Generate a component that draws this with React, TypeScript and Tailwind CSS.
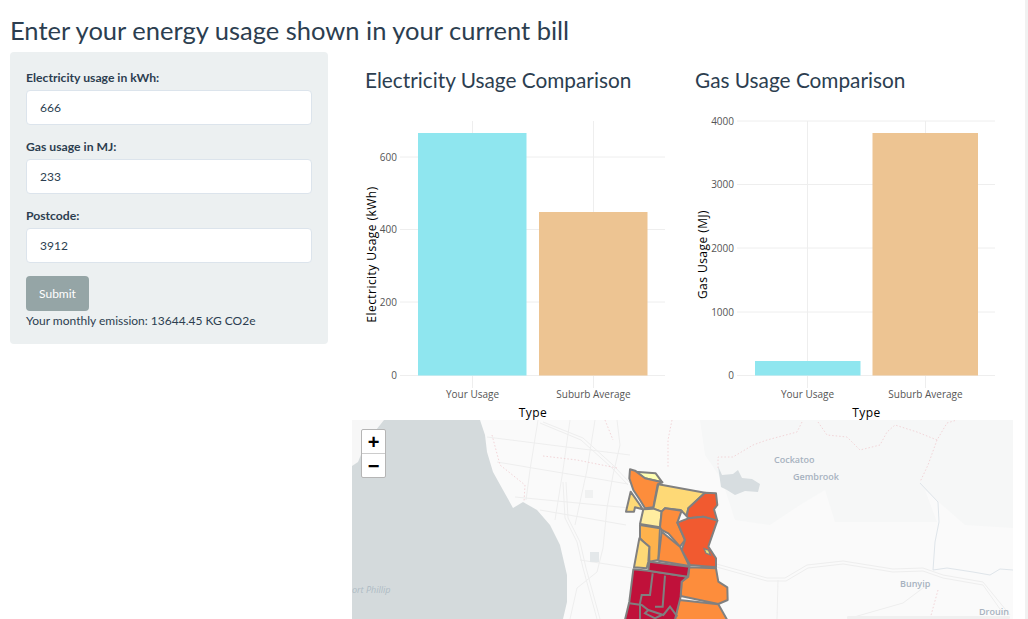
const LATO = "font-['Lato',sans-serif]";

type Bar = { x: number; w: number; top: number; fill: string };

type ChartSpec = {
  // all numbers are page pixels, the svg viewBox is offset to match
  left: number;
  plotLeft: number;
  plotRight: number;
  yTicks: { label: string; y: number }[];
  xTicks: { label: string; x: number }[];
  bars: Bar[];
  yTitle: string;
  yTitleX: number;
  xTitleX: number;
};

const CYAN = "#8fe6ef";
const TAN = "#edc492";

const elecChart: ChartSpec = {
  left: 352,
  plotLeft: 400,
  plotRight: 665,
  yTicks: [
    { label: "600", y: 157 },
    { label: "400", y: 229.5 },
    { label: "200", y: 302 },
    { label: "0", y: 375.5 },
  ],
  xTicks: [
    { label: "Your Usage", x: 472.5 },
    { label: "Suburb Average", x: 593.5 },
  ],
  bars: [
    { x: 418, w: 108.5, top: 133, fill: CYAN },
    { x: 539, w: 108.5, top: 212, fill: TAN },
  ],
  yTitle: "Electricity Usage (kWh)",
  yTitleX: 376,
  xTitleX: 533,
};

const gasChart: ChartSpec = {
  left: 682,
  plotLeft: 737,
  plotRight: 995,
  yTicks: [
    { label: "4000", y: 121 },
    { label: "3000", y: 184.5 },
    { label: "2000", y: 248 },
    { label: "1000", y: 312 },
    { label: "0", y: 375.5 },
  ],
  xTicks: [
    { label: "Your Usage", x: 807.5 },
    { label: "Suburb Average", x: 925.5 },
  ],
  bars: [
    { x: 755, w: 105.5, top: 361, fill: CYAN },
    { x: 872.5, w: 105.5, top: 133, fill: TAN },
  ],
  yTitle: "Gas Usage (MJ)",
  yTitleX: 707,
  xTitleX: 866.5,
};

function UsageChart({ spec, width }: { spec: ChartSpec; width: number }) {
  return (
    <svg
      viewBox={`${spec.left} 104 ${width} 316`}
      width={width}
      height={316}
      className="block"
    >
      {spec.yTicks.map((t) => (
        <g key={t.label}>
          <line
            x1={spec.plotLeft}
            x2={spec.plotRight}
            y1={t.y}
            y2={t.y}
            stroke="#eeeeee"
          />
          <text
            x={spec.plotLeft - 3}
            y={t.y + 3.5}
            textAnchor="end"
            fontSize={10}
            fill="#555555"
            fontFamily="'Open Sans', sans-serif"
          >
            {t.label}
          </text>
        </g>
      ))}
      {spec.xTicks.map((t) => (
        <g key={t.label}>
          <line x1={t.x} x2={t.x} y1={121} y2={388} stroke="#eeeeee" />
          <text
            x={t.x}
            y={398}
            textAnchor="middle"
            fontSize={10}
            fill="#555555"
            fontFamily="'Open Sans', sans-serif"
          >
            {t.label}
          </text>
        </g>
      ))}
      {spec.bars.map((b) => (
        <rect
          key={b.x}
          x={b.x}
          y={b.top}
          width={b.w}
          height={375.5 - b.top}
          fill={b.fill}
        />
      ))}
      <text
        transform={`translate(${spec.yTitleX} 254.5) rotate(-90)`}
        textAnchor="middle"
        fontSize={12}
        letterSpacing={0.45}
        fill="#000000"
        fontFamily="'Open Sans', sans-serif"
      >
        {spec.yTitle}
      </text>
      <text
        x={spec.xTitleX}
        y={417}
        textAnchor="middle"
        fontSize={12}
        letterSpacing={0.5}
        fill="#000000"
        fontFamily="'Open Sans', sans-serif"
      >
        Type
      </text>
    </svg>
  );
}

function Field({ label, value }: { label: string; value: string }) {
  return (
    <div className="mb-[13px]">
      <label className="mb-[4px] block text-[12.2px] leading-[17px] font-bold text-[#2c3e50]">
        {label}
      </label>
      <input
        readOnly
        value={value}
        className="block h-[35px] w-full rounded-[4px] border border-[#dce4ec] bg-white px-[13px] text-[12px] text-[#2c3e50]"
      />
    </div>
  );
}

// [fill, points], points are at 3x around (590,450), see the group transform
const REGIONS: [string, string][] = [
  ["#ffffb2", "135,65 197,70 217,97 165,85"],
  ["#fd8d3c", "120,58 135,62 165,85 217,97 203,103 190,172 165,175 150,150 130,120 118,85"],
  ["#fed976", "122,125 150,165 158,178 135,172 132,185 108,185"],
  ["#fed976", "205,103 345,128 295,175 290,198 272,180 225,175 215,185 190,176"],
  ["#ffeda0", "160,178 190,176 215,185 210,232 150,222"],
  ["#fd8d3c", "225,175 275,182 262,218 285,270 270,290 235,250 215,240 210,232 215,185"],
  ["#f15a30", "345,128 378,130 382,165 372,178 382,212 340,200 295,205 290,198 295,175"],
  ["#f15a30", "262,218 295,205 340,200 382,212 355,290 378,325 378,352 300,345 275,300 285,270"],
  ["#feb24c", "150,225 210,235 205,330 178,335 178,290 160,275 150,265"],
  ["#fed976", "148,265 178,290 175,335 170,355 132,352"],
  ["#fd8d3c", "215,245 270,290 298,348 205,332"],
  ["#fd8d3c", "298,352 378,355 385,395 412,412 413,450 385,462 272,438 275,395 295,380"],
  ["#fd8d3c", "268,450 385,463 410,507 420,530 250,530"],
  ["#c0113a", "130,358 175,362 293,380 275,395 272,440 262,480 250,530 100,530 118,455"],
  ["#c0113a", "178,335 298,350 293,380 175,362"],
];

const INNER_LINES = [
  "M188 370 L180 435 L155 435 L150 460 L150 530",
  "M225 377 L218 470 L195 470",
  "M118 460 L155 465 L175 480 L220 495 L240 470 L262 500",
  "M175 480 L165 490 L195 505 L215 495",
];

const ROADS = [
  "M543 422 L583 438 L613 465 L630 483",
  "M540 423 L581 440 L611 467 L628 485",
  "M617 420 L620 445 L613 475 L607 508 L603 548 L597 572 L577 588 L570 619",
  "M563 482 L565 518 L577 542 L583 568 L597 619",
  "M566 482 L568 518 L580 542 L586 568 L600 619",
  "M487 437 L630 455",
  "M497 462 L628 484",
  "M538 420 L530 470 L526 500",
  "M570 420 L563 470 L555 520",
  "M595 420 L587 470 L575 525",
  "M515 497 L630 508",
  "M540 510 L626 525",
  "M580 560 L632 568",
  "M713 563 L767 578 L785 578 L807 565 L843 561 L893 569 L923 568 L943 575 L983 582 L1010 615",
  "M713 566 L767 581 L786 581 L808 568 L843 564 L893 572 L923 571 L943 578 L983 585 L1007 619",
  "M927 585 L903 603 L847 619",
  "M778 580 L777 619",
];

const BOUNDARIES = [
  "M492 435 L500 465 L525 485 L524 502",
  "M543 456 L577 460 L617 468",
  "M605 420 L613 440",
  "M672 420 L668 440 L668 468",
  "M802 422 L797 432 L767 440 L753 445 L733 457 L718 457 L718 468",
  "M818 422 L827 435 L847 437 L860 450 L880 445 L887 432 L895 425 L917 432 L937 440 L947 423 L957 420",
  "M937 440 L928 465 L920 482",
  "M938 590 L930 619",
];

function MelbourneMap() {
  return (
    <svg viewBox="352 420 661 199" width={661} height={199} className="block">
      <rect x={352} y={420} width={661} height={199} fill="#fafafa" />
      {/* forest shading */}
      <path
        d="M700 420 L1013 420 L1013 528 L965 525 L925 490 L937 522 L880 522 L835 522 L825 490 L800 505 L770 525 L735 520 L722 480 L705 455 Z"
        fill="#f6f7f7"
      />
      <path
        d="M352 420 L384 420 L376 430 L365 445 L358 462 L352 466 Z"
        fill="#f7f7f7"
      />
      {ROADS.map((d) => (
        <path key={d} d={d} fill="none" stroke="#eeeeee" strokeWidth={1} />
      ))}
      {BOUNDARIES.map((d) => (
        <path
          key={d}
          d={d}
          fill="none"
          stroke="#f2d5d8"
          strokeWidth={1}
          strokeDasharray="1.5 2"
        />
      ))}
      {/* Port Phillip */}
      <path
        d="M384 420 L480 420 L485 435 L487 452 L493 472 L503 490 L513 508 L523 502 L537 510 L550 525 L560 545 L567 575 L567 602 L563 619 L352 619 L352 466 L358 462 L365 445 L376 430 Z"
        fill="#d4dadc"
      />
      {/* Cardinia reservoir */}
      <path
        d="M718 466 L722 475 L733 474 L738 470 L742 478 L752 479 L760 484 L758 492 L745 491 L735 495 L727 490 L721 487 Z"
        fill="#d7dde0"
      />
      {/* Bunyip river */}
      <path
        d="M920 483 L938 502 L939 522 L935 542 L933 570 L947 568 L973 572 L990 575 L1000 569 L1013 570"
        fill="none"
        stroke="#dfe5ea"
      />
      <rect x={585} y={490} width={8} height={8} fill="#f0f1f1" />
      <rect x={590} y={552} width={9} height={10} fill="#e4e8ea" />
      <rect x={847} y={616} width={163} height={3} rx={1} fill="#f0f0f0" />
      <g
        fontFamily="'Open Sans', sans-serif"
        fontSize={9}
        fill="#a7b2bf"
        fontWeight={600}
      >
        <text x={774} y={463}>
          Cockatoo
        </text>
        <text x={793} y={480}>
          Gembrook
        </text>
        <text x={900} y={587}>
          Bunyip
        </text>
        <text x={979} y={615}>
          Drouin
        </text>
        <text x={352} y={593} fontStyle="italic" fontWeight={400} fill="#aebbc4">
          ort Phillip
        </text>
      </g>
      <g transform="translate(590 450) scale(0.3333)">
        {REGIONS.map(([fill, points]) => (
          <polygon
            key={points}
            points={points}
            fill={fill}
            stroke="#808080"
            strokeWidth={6}
            strokeLinejoin="round"
          />
        ))}
        {INNER_LINES.map((d) => (
          <path key={d} d={d} fill="none" stroke="#808080" strokeWidth={6} />
        ))}
        <polygon points="342,296 355,300 362,315 348,310" fill="#e3e27a" stroke="#808080" strokeWidth={4} />
      </g>
    </svg>
  );
}

export default function App() {
  return (
    <div className={`${LATO} h-[619px] w-[1028px] overflow-hidden border-r-[3px] border-[#f1f1f1] bg-white text-[#2c3e50]`}>
      <div className="px-[10px]">
        <h2 className="h-[52px] pt-[12px] text-[25.5px] leading-[36px] font-normal">
          Enter your energy usage shown in your current bill
        </h2>
        <div className="flex items-start">
          <form className="h-[292px] w-[318px] shrink-0 rounded-[4px] bg-[#ecf0f1] px-[16px] pt-[17px]">
            <Field label="Electricity usage in kWh:" value="666" />
            <Field label="Gas usage in MJ:" value="233" />
            <Field label="Postcode:" value="3912" />
            <button
              type="button"
              className="block h-[35px] w-[63px] rounded-[4px] bg-[#95a5a6] text-[12px] text-white"
            >
              Submit
            </button>
            <div className="mt-[1px] text-[12px] leading-[17px] text-[#2c3e50]">
              Your monthly emission: 13644.45 KG CO2e
            </div>
          </form>
          <div className="ml-[24px] w-[661px] shrink-0">
            <div className="flex">
              <div className="w-[330px]">
                <h3 className="h-[52px] pt-[12px] pl-[13px] text-[20.8px] leading-[32px] font-normal">
                  Electricity Usage Comparison
                </h3>
                <UsageChart spec={elecChart} width={330} />
              </div>
              <div className="w-[331px]">
                <h3 className="h-[52px] pt-[12px] pl-[13px] text-[20.8px] leading-[32px] font-normal">
                  Gas Usage Comparison
                </h3>
                <UsageChart spec={gasChart} width={331} />
              </div>
            </div>
            <div className="relative">
              <MelbourneMap />
              <div className="absolute top-[9px] left-[9px] w-[25px] overflow-hidden rounded-[2px] border border-[#b5b5b5] bg-white text-black">
                <div className="flex h-[24px] items-center justify-center border-b border-[#cccccc] font-['Liberation_Sans',sans-serif] text-[20px] leading-none font-bold">
                  +
                </div>
                <div className="flex h-[23px] items-center justify-center font-['Liberation_Sans',sans-serif] text-[20px] leading-none font-bold">
                  −
                </div>
              </div>
            </div>
          </div>
        </div>
      </div>
    </div>
  );
}
